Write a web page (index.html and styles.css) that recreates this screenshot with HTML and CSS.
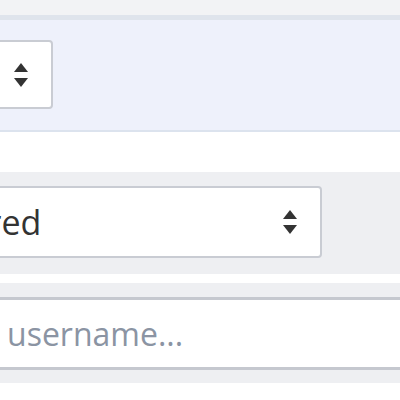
FILE: index.html
```html
<!DOCTYPE html>
<html lang="en">
<head>
    <meta charset="UTF-8">
    <meta name="viewport" content="width=device-width, initial-scale=1.0">
    <title>Users | Filters</title>
    <link rel="stylesheet" href="styles.css">
</head>
<body>
    <div class="page">
        <div class="topbar"></div>

        <!-- Per page selector -->
        <div class="toolbar">
            <div class="select select-small">
                <span class="select-value">25</span>
                <svg class="select-arrow" width="16" height="24" viewBox="0 0 16 24">
                    <path d="M8 0 L15 9 H1 Z"/>
                    <path d="M1 15 H15 L8 24 Z"/>
                </svg>
            </div>
        </div>

        <div class="spacer"></div>

        <!-- Filters -->
        <div class="filters">
            <div class="filter-row">
                <div class="select select-status">
                    <span class="select-value">Featured</span>
                    <svg class="select-arrow" width="16" height="24" viewBox="0 0 16 24">
                        <path d="M8 0 L15 9 H1 Z"/>
                        <path d="M1 15 H15 L8 24 Z"/>
                    </svg>
                </div>
            </div>
            <div class="filter-row filter-row-search">
                <input type="text" class="search-input" placeholder="username...">
            </div>
        </div>
    </div>
</body>
</html>
```

FILE: styles.css
```css
body {
    margin: 0;
    padding: 0;
    background: #fff;
    font-family: "Open Sans", "Noto Sans", sans-serif;
    overflow: hidden;
}

.page {
    margin-left: -160px;
    width: 620px;
}

.topbar {
    height: 15px;
    background: #f2f3f5;
    border-bottom: 5px solid #dfe4ec;
}

/* Toolbar */
.toolbar {
    background: #eef1fb;
    padding: 20px 0 21px 30px;
    border-bottom: 2px solid #dce3ee;
}

.select {
    display: flex;
    align-items: center;
    justify-content: space-between;
    box-sizing: border-box;
    background: #fff;
    border: 2px solid #c9ccd3;
    border-radius: 4px;
    padding: 0 22px 0 24px;
    color: #333;
    font-size: 33px;
}

.select-small {
    width: 183px;
    height: 69px;
}

.select-value {
    white-space: nowrap;
}

.select-arrow {
    flex-shrink: 0;
    fill: #333;
}

.spacer {
    height: 40px;
}

/* Filters */
.filters {
    background: #eeeff2;
    padding-bottom: 13px;
}

.filter-row {
    padding: 14px 0 16px 30px;
}

.select-status {
    width: 452px;
    height: 72px;
    padding-left: 27px;
    font-size: 34px;
}

.filter-row-search {
    border-top: 9px solid #fff;
    padding: 14px 0 0 0;
}

.search-input {
    display: block;
    box-sizing: border-box;
    width: 100%;
    height: 73px;
    margin: 0;
    border: 3px solid #c5c8cf;
    background: #fff;
    padding: 0 0 0 164px;
    font-family: "Open Sans", "Noto Sans", sans-serif;
    font-size: 32px;
    color: #333;
    outline: none;
}

.search-input::placeholder {
    color: #8b94a3;
}
```
